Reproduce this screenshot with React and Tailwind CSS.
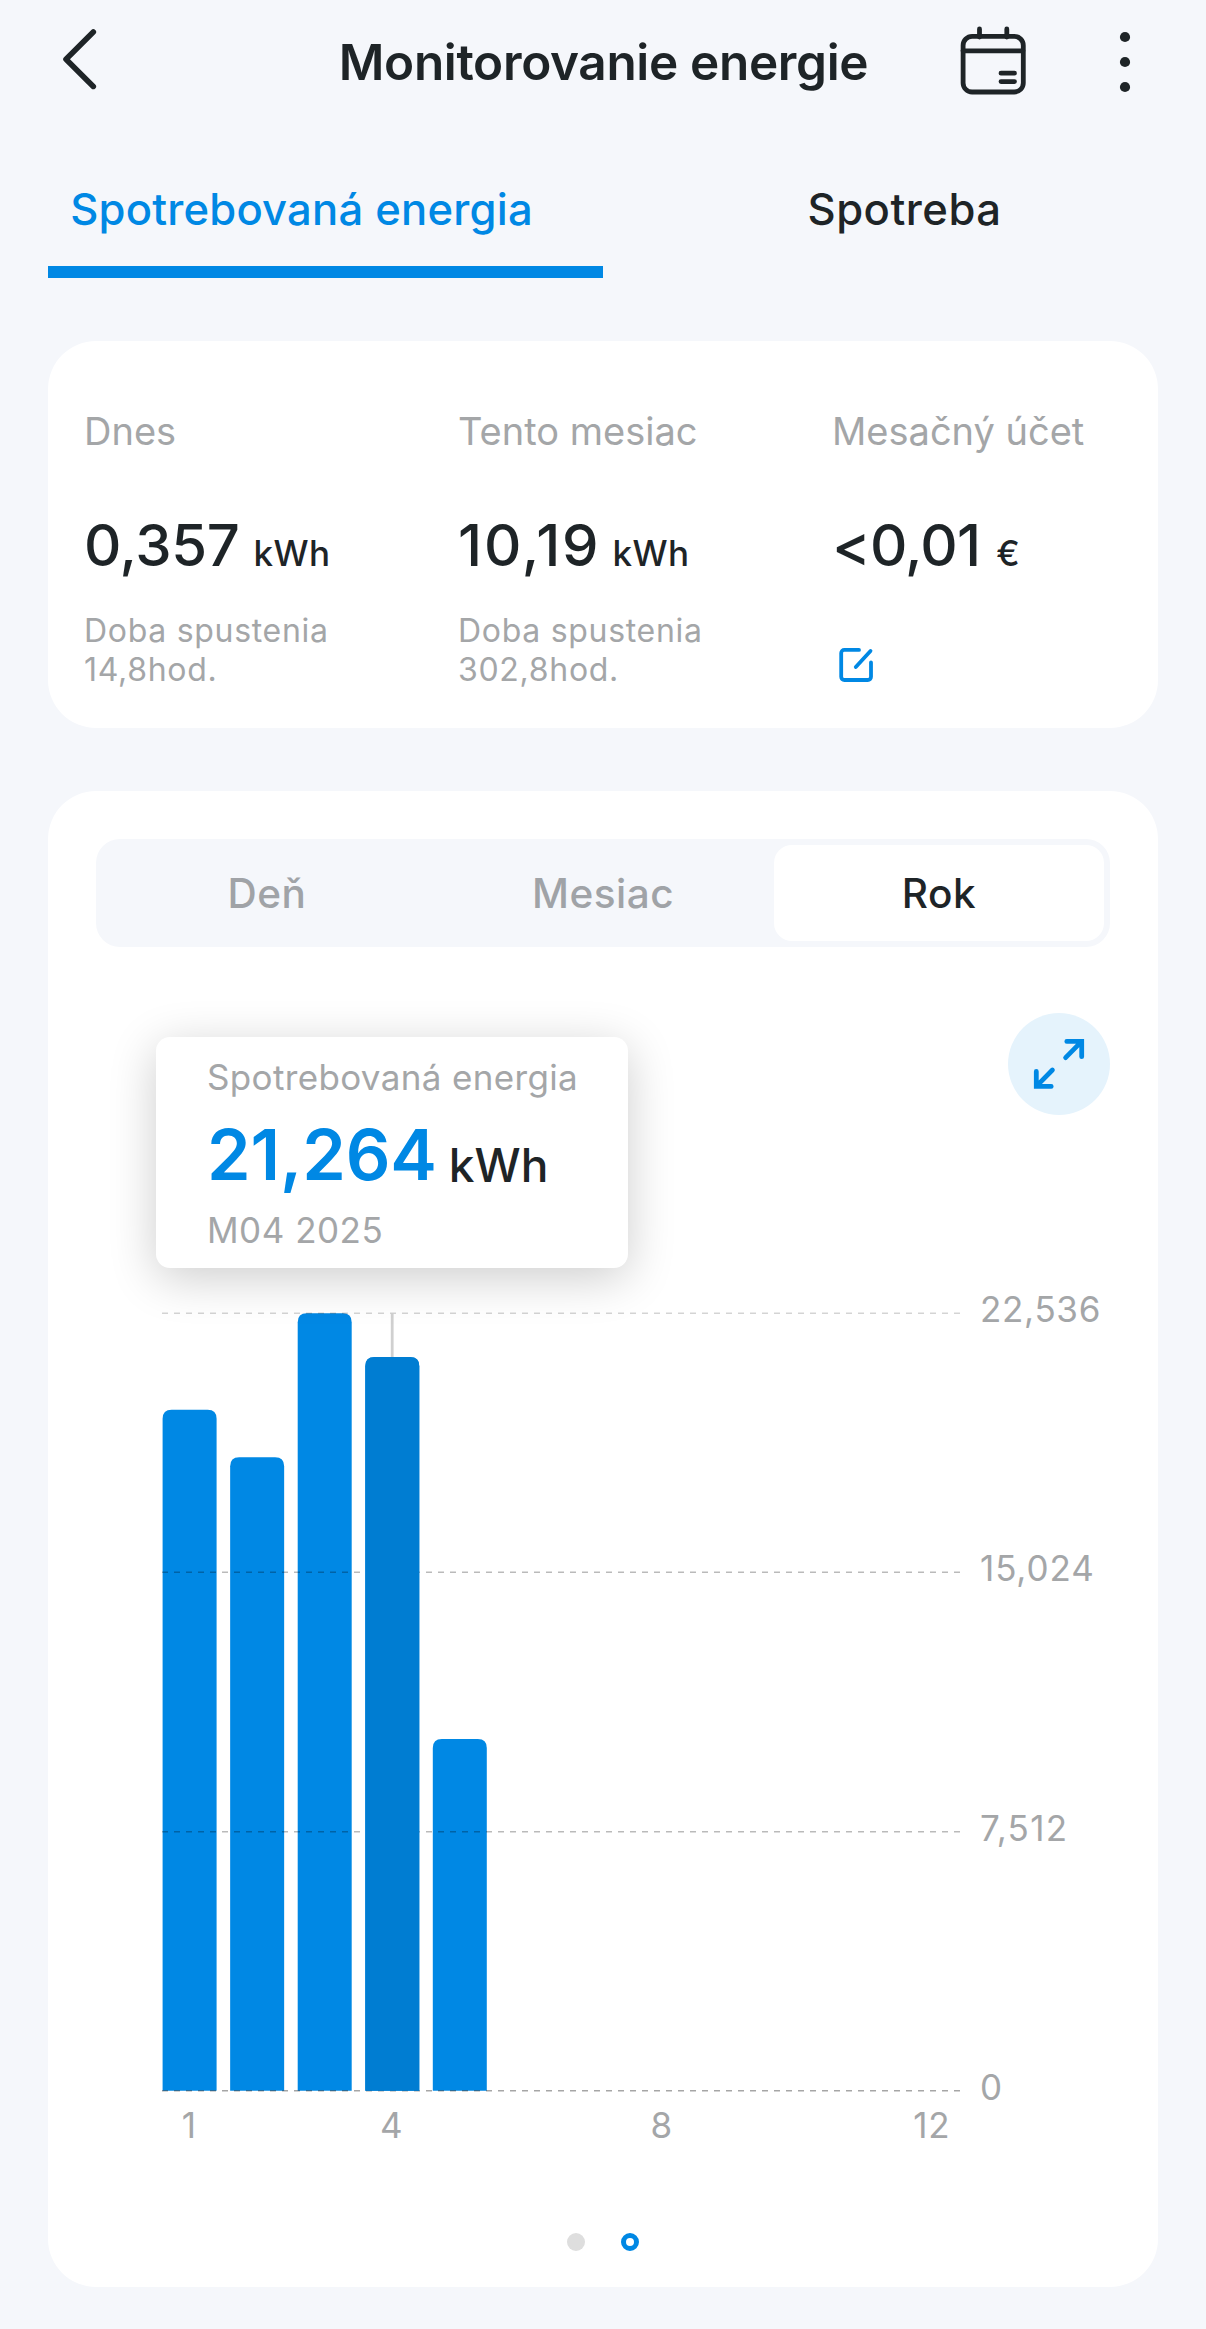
import { useState } from "react";

const tabs = ["Spotrebovaná energia", "Spotreba"];
const periods = ["Deň", "Mesiac", "Rok"];

// kWh per month, index 0 = January
const months = [19.74, 18.36, 22.536, 21.264, 10.2];
const MAX = 22.536;
const CHART_H = 777.5;

const gridLines = [
  { label: "22,536", y: 23, opacity: 0.17, spacing: 0.7 },
  { label: "15,024", y: 282, opacity: 0.27, spacing: 0.9 },
  { label: "7,512", y: 541.5, opacity: 0.27, spacing: 1.3 },
  { label: "0", y: 800.5, opacity: 0.35, spacing: 0 },
];

function Header() {
  return (
    <header className="grid h-[124px] grid-cols-[1fr_auto_1fr] items-center pl-[60px] pr-[71px]">
      <button className="w-10" aria-label="Späť">
        <svg width="40" height="80" viewBox="0 0 40 80" fill="none" stroke="#1e2427" strokeWidth="5.6" strokeLinecap="round" strokeLinejoin="round">
          <path d="M33.3 10 6 37.2 33.3 64.4" />
        </svg>
      </button>
      <h1 className="ml-[12px] text-[49.5px] leading-[60px] font-semibold tracking-[-0.34px]">Monitorovanie energie</h1>
      <div className="flex items-center justify-end gap-[86px]">
        <svg width="72" height="80" viewBox="0 0 72 80" fill="none" stroke="#1e2427" strokeWidth="4.8" strokeLinecap="round">
          <rect x="6.1" y="14.4" width="60.2" height="55.6" rx="9" />
          <path d="M6 28.8h60M22.5 7v8M49.8 7v8M44 51.2h13.5M44 59.6h13.5" />
        </svg>
        <svg width="20" height="80" viewBox="0 0 20 80" fill="#1e2427">
          <circle cx="10" cy="15" r="5.1" />
          <circle cx="10" cy="40" r="5.1" />
          <circle cx="10" cy="65" r="5.1" />
        </svg>
      </div>
    </header>
  );
}

function Stat({ title, value, unit, valueClass, children }) {
  return (
    <div className="w-[374px] shrink-0">
      <p className="text-[38px] leading-[46px] text-[#a4a6a8]">{title}</p>
      <p className="mt-[56px] flex h-[70px] items-baseline leading-[70px] font-medium">
        <span className={`text-[58px] ${valueClass}`}>{value}</span>
        <span className="text-[35px] tracking-[0.4px]">{unit}</span>
      </p>
      {children}
    </div>
  );
}

function Uptime({ hours }) {
  return (
    <p className="mt-[31px] text-[32px] leading-[39px] tracking-[0.7px] text-[#a4a6a8]">
      Doba spustenia
      <br />
      {hours}
    </p>
  );
}

function Chart() {
  return (
    <svg className="block overflow-visible" width="1014" height="900" viewBox="0 0 1014 900">
      {months.map((v, i) => {
        const h = (v / MAX) * CHART_H;
        const x = 66.6 + i * 67.55;
        const top = 800.8 - h;
        return (
          <path
            key={i}
            d={`M${x} 800.8V${top + 9}q0-9 9-9h36q9 0 9 9V800.8z`}
            fill="#0088e4"
          />
        );
      })}
      {gridLines.map((g) => (
        <g key={g.label}>
          <line x1="66" x2="864" y1={g.y + 0.3} y2={g.y + 0.3} stroke="#000" strokeOpacity={g.opacity} strokeWidth="1.4" strokeDasharray="6 6" />
          <text x="884" y={g.y + 9} fontSize="35" letterSpacing={g.spacing} fill="#a4a6a8">{g.label}</text>
        </g>
      ))}
      {/* selected month */}
      <path d="M296.2 23v45" stroke="#d0d0d0" strokeWidth="2.8" />
      <path d="M269.3 800.8V75.9q0-9 9-9h36q9 0 9 9V800.8z" fill="#007dd2" />
      {[1, 4, 8, 12].map((m) => (
        <text key={m} x={93.2 + (m - 1) * 67.5} y="847.7" fontSize="35" letterSpacing="0.7" textAnchor="middle" fill="#a4a6a8">
          {m}
        </text>
      ))}
    </svg>
  );
}

export default function App() {
  const [tab, setTab] = useState(0);
  const [period, setPeriod] = useState(2);

  return (
    <div className="min-h-[2329px] w-[1206px] bg-[#f5f7fb] font-['Inter',sans-serif] text-[#1e2427]">
      <Header />

      <nav className="mx-12 grid grid-cols-2">
        {tabs.map((t, i) => (
          <button
            key={t}
            onClick={() => setTab(i)}
            className={`h-[154px] border-b-[12px] pt-[30px] text-[43.6px] font-medium tracking-[0.2px] first:pr-12 last:pl-12 last:tracking-[0.5px] ${
              tab === i ? "border-[#0088e4] text-[#0088e4]" : "border-transparent"
            }`}
          >
            {t}
          </button>
        ))}
      </nav>

      <section className="mx-12 mt-[63px] flex h-[387px] rounded-[48px] bg-white pl-9 pt-[67px]">
        <Stat title="Dnes" value="0,357" unit="kWh" valueClass="mr-[14px] tracking-[-0.38px]">
          <Uptime hours="14,8hod." />
        </Stat>
        <Stat title="Tento mesiac" value="10,19" unit="kWh" valueClass="mr-[12px] tracking-[1.9px]">
          <Uptime hours="302,8hod." />
        </Stat>
        <Stat title="Mesačný účet" value="<0,01" unit="€" valueClass="mr-[16px] tracking-[-0.77px]">
          <svg className="mt-[65px] ml-[3px]" width="42" height="42" viewBox="0 0 42 42" fill="none" stroke="#0088e4" strokeWidth="3.8" strokeLinecap="round" strokeLinejoin="round">
            <path d="M24 4.9H9.4a3.2 3.2 0 0 0-3.2 3.2v23.7A3.2 3.2 0 0 0 9.4 35h23.4a3.2 3.2 0 0 0 3.2-3.2V17.5M20.8 22 35.5 6" />
          </svg>
        </Stat>
      </section>

      <section className="relative mx-12 mt-[63px] h-[1496px] rounded-[48px] bg-white px-12 pt-12">
        <div className="grid h-[108px] grid-cols-3 gap-1.5 rounded-[24px] bg-[#f5f7fb] p-1.5">
          {periods.map((p, i) => (
            <button
              key={p}
              onClick={() => setPeriod(i)}
              className={`rounded-[18px] pt-0.5 text-[40.5px] font-medium tracking-[0.5px] ${
                period === i ? "bg-white" : "text-[#a0a3a7]"
              }`}
            >
              {p}
            </button>
          ))}
        </div>

        <div className="mt-[66px] flex justify-end">
          <button className="flex h-[102px] w-[102px] items-center justify-center rounded-full bg-[#e5f3fc]" aria-label="Na celú obrazovku">
            <svg width="60" height="60" viewBox="0 0 60 60" fill="none" stroke="#0088e4" strokeWidth="4.8" strokeLinecap="round">
              <path d="M37.8 7.4h14.9v15.3M52.2 7.9 36.6 23.6M22.2 52.4H7.3V37.4M7.8 51.9 23.4 36" />
            </svg>
          </button>
        </div>

        <div className="mt-[175px]">
          <Chart />
        </div>

        <div className="mt-[43px] flex justify-center gap-9">
          <span className="h-[18px] w-[18px] rounded-full bg-[#dedede]" />
          <span className="h-[18px] w-[18px] rounded-full border-[5px] border-[#0088e4]" />
        </div>

        <div className="absolute top-[246px] left-[108px] h-[231px] w-[472px] rounded-[14px] bg-white pl-[51px] pt-[19px] shadow-[0_10px_48px_rgba(0,0,0,0.2)]">
          <p className="text-[35px] leading-[42px] tracking-[0.35px] text-[#a4a6a8]">Spotrebovaná energia</p>
          <p className="mt-[15px] flex h-[84px] items-baseline gap-[12px] leading-[84px]">
            <span className="text-[70px] font-semibold tracking-[-0.12px] text-[#0088e4]">21,264</span>
            <span className="translate-y-0.5 text-[46px] font-medium">kWh</span>
          </p>
          <p className="mt-[12px] text-[35px] leading-[42px] tracking-[0.5px] text-[#a4a6a8]">M04 2025</p>
        </div>
      </section>
    </div>
  );
}
